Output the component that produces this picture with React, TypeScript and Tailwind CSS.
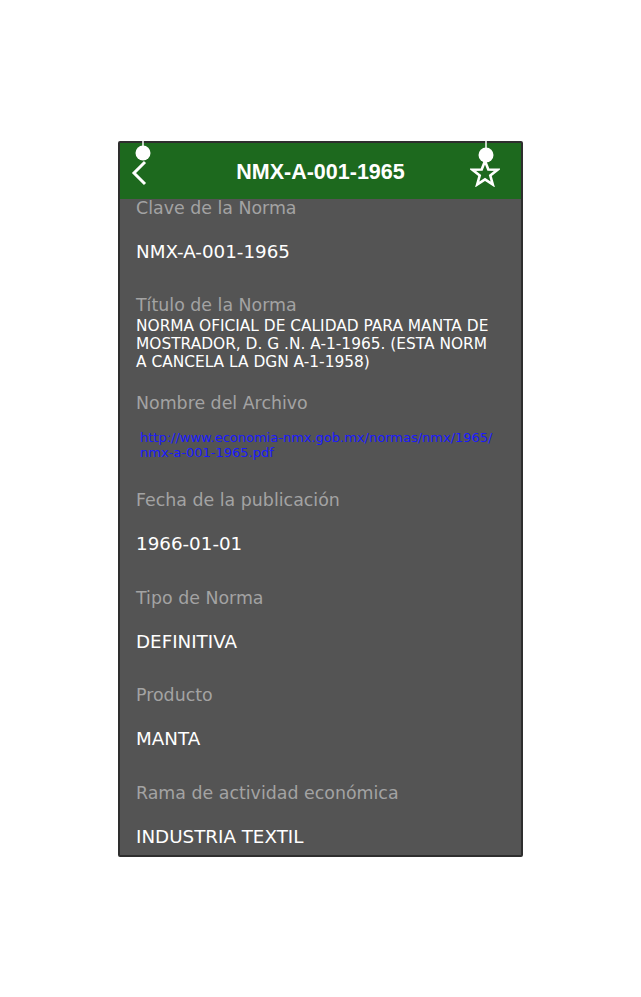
const rest = [
  { label: "Fecha de la publicación", value: "1966-01-01" },
  { label: "Tipo de Norma", value: "DEFINITIVA" },
  { label: "Producto", value: "MANTA" },
  { label: "Rama de actividad económica", value: "INDUSTRIA TEXTIL" },
];

function Pin({ className }: { className: string }) {
  return (
    <svg className={"absolute " + className} width="18" height="26" viewBox="0 0 18 26">
      <line x1="9" y1="0" x2="9" y2="10" stroke="#fff" strokeWidth="1.5" />
      <circle cx="9" cy="15" r="7.5" fill="#fff" />
    </svg>
  );
}

function Label({ children }: { children: React.ReactNode }) {
  return <div className="text-[17.4px] leading-[20px] text-[#a3a3a3]">{children}</div>;
}

function Value({ children }: { children: React.ReactNode }) {
  return <div className="mt-[24px] text-[18.3px] leading-[20px] text-white">{children}</div>;
}

export default function App() {
  return (
    <div className="min-h-[997px] w-full bg-white flex justify-center pt-[141px] font-['DejaVu_Sans',sans-serif]">
      <div className="relative w-[405px] h-[716px] border-2 border-[#2e2e2e] rounded-[2px] bg-[#545454] flex flex-col">
        <div className="h-[56px] bg-[#1d691e] flex items-center justify-center relative">
          <span className="text-white text-[21.5px] font-bold font-['Liberation_Sans',Arial,sans-serif] mt-[3px]">
            NMX-A-001-1965
          </span>
          <svg className="absolute left-[11px] top-[17px]" width="18" height="26" viewBox="0 0 18 26">
            <polyline points="14,2 3,13 14,24" fill="none" stroke="#fff" strokeWidth="3" />
          </svg>
          <svg className="absolute right-[21px] top-[16px]" width="30" height="28" viewBox="0 0 30 28">
            <polygon
              points="15,2 18.3,10.5 27.5,10.8 20.3,16.5 22.8,25.5 15,20.3 7.2,25.5 9.7,16.5 2.5,10.8 11.7,10.5"
              fill="none"
              stroke="#fff"
              strokeWidth="2.6"
            />
          </svg>
        </div>
        <Pin className="left-[14px] -top-[5px]" />
        <Pin className="right-[26px] -top-[3px]" />

        <div className="pl-[16px] pr-[12px] -mt-[1px]">
          <div>
            <Label>Clave de la Norma</Label>
            <Value>NMX-A-001-1965</Value>
          </div>

          <div className="mt-[33px]">
            <Label>Título de la Norma</Label>
            <div className="mt-[2px] text-[15.4px] leading-[18px] text-white">
              <div>NORMA OFICIAL DE CALIDAD PARA MANTA DE</div>
              <div>MOSTRADOR, D. G .N. A-1-1965. (ESTA NORM</div>
              <div>A CANCELA LA DGN A-1-1958)</div>
            </div>
          </div>

          <div className="mt-[22px]">
            <Label>Nombre del Archivo</Label>
            <div className="mt-[17px] pl-[4px] text-[13px] leading-[15px] text-[#1a1aff]">
              <div>http://www.economia-nmx.gob.mx/normas/nmx/1965/</div>
              <div>nmx-a-001-1965.pdf</div>
            </div>
          </div>

          {rest.map((f, i) => (
            <div key={f.label} className={i === 0 ? "mt-[30px]" : "mt-[33.7px]"}>
              <Label>{f.label}</Label>
              <Value>{f.value}</Value>
            </div>
          ))}
        </div>
      </div>
    </div>
  );
}
